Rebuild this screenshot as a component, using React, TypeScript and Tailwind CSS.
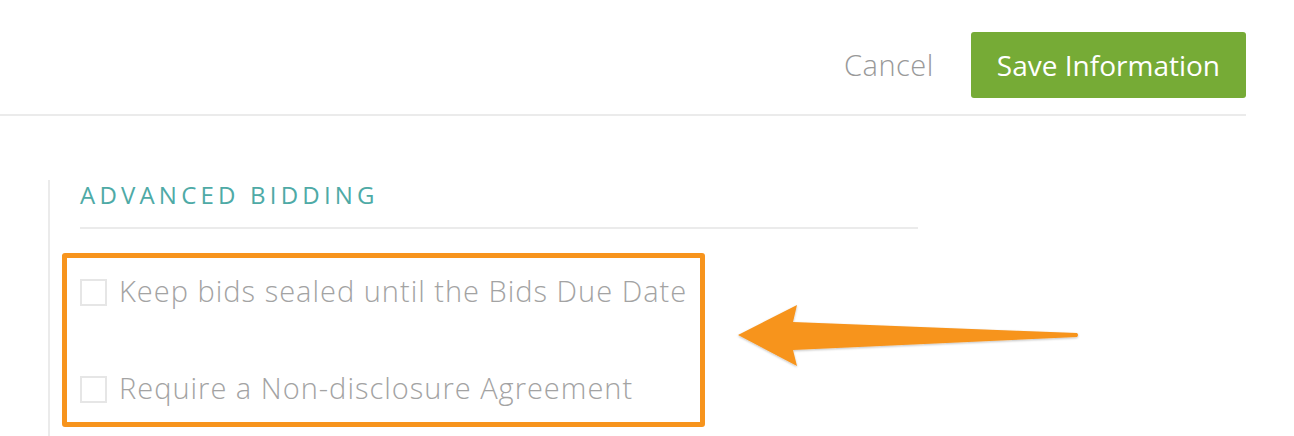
import React from 'react';

const options = [
  'Keep bids sealed until the Bids Due Date',
  'Require a Non-disclosure Agreement',
];

export default function App() {
  return (
    <div className="relative h-[436px] w-full overflow-hidden bg-white font-['Open_Sans',sans-serif]">
      {/* header actions */}
      <div className="mr-12 flex items-center justify-end gap-[37px] border-b-2 border-[#ebebeb] pt-8 pb-4">
        <button className="text-[29px] font-light tracking-[0.5px] text-[#999999]">Cancel</button>
        <button className="h-[66px] rounded-[3px] bg-[#76ab36] px-[26px] text-[28px] text-white">
          Save Information
        </button>
      </div>

      <div className="ml-12 mt-16 h-[300px] border-l-2 border-[#ebebeb] pl-[30px]">
        <h2 className="pt-[3px] text-[24px] font-medium leading-none tracking-[4.2px] text-[#4eaaa6]">ADVANCED BIDDING</h2>
        <div className="mt-[20px] h-[2px] w-[838px] bg-[#ebebeb]" />

        <div className="flex flex-col gap-[70px] pt-[50px]">
          {options.map((o) => (
            <label key={o} className="flex items-center gap-[12px]">
              <span className="h-[27px] w-[27px] border-2 border-[#e6e6e6] bg-white" />
              <span className="-mt-[3px] text-[29px] font-light leading-[28px] tracking-[1px] text-[#a3a3a3]">{o}</span>
            </label>
          ))}
        </div>
      </div>

      {/* annotation overlay */}
      <div className="absolute left-[62px] top-[253px] h-[174px] w-[643px] rounded-[3px] border-[5px] border-[#f7941d]" />
      <svg className="absolute left-[730px] top-[295px]" width="360" height="80" viewBox="0 0 360 80">
        <defs>
          <filter id="sh" x="-10%" y="-30%" width="120%" height="160%">
            <feDropShadow dx="0" dy="1" stdDeviation="1.2" floodColor="#000" floodOpacity="0.25" />
          </filter>
        </defs>
        <path
          d="M8 40 L67 10 L63 27 L347 38 Q349 40 347 42 L63 55 L67 71 Z"
          fill="#f7941d"
          filter="url(#sh)"
        />
      </svg>
    </div>
  );
}
